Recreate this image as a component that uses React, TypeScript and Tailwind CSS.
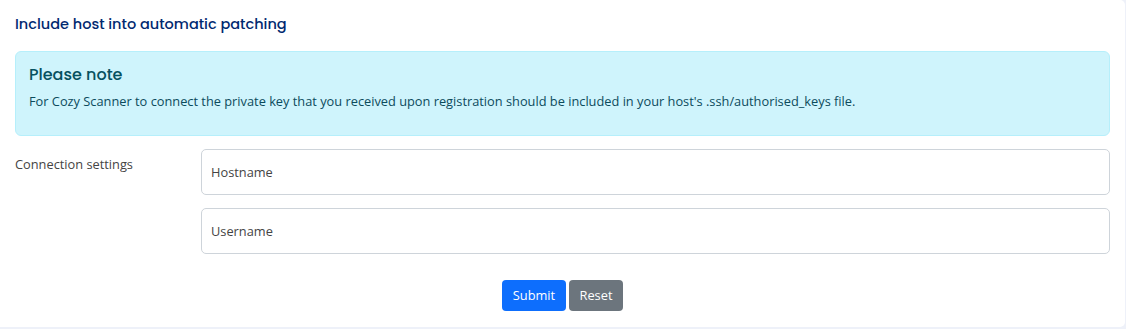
import React from 'react';

const heading = { fontFamily: 'Poppins, Inter, "Noto Sans", sans-serif' };

export default function App() {
  return (
    <div className="h-[329px] w-[1126px] bg-[#eef1f9] font-['Open_Sans',sans-serif]">
      <div className="h-[327px] w-[1125px] rounded-br-[5px] rounded-tr-[5px] bg-white px-[15px] pt-[14px]">
        <h2 style={heading} className="text-[14.5px] font-medium leading-[20px] text-[#012970]">
          Include host into automatic patching
        </h2>

        <div className="mt-[17px] h-[85px] w-[1095px] rounded-[6px] border border-[#b6effb] bg-[#cff4fc] px-[13px] pt-[12px] text-[#055160]">
          <h4 style={heading} className="text-[16px] font-medium leading-[22px]">Please note</h4>
          <p className="mt-[5px] text-[12.8px] leading-[20px] text-[#0c4b5c]">
            For Cozy Scanner to connect the private key that you received upon registration should be included in your host's .ssh/authorised_keys file.
          </p>
        </div>

        <div className="mt-[13px] flex w-[1095px]">
          <label className="w-[186px] pt-[5px] text-[12.8px] leading-[20px] text-[#444444]">Connection settings</label>
          <div className="flex flex-1 flex-col gap-[13px]">
            <input
              placeholder="Hostname"
              className="h-[46px] w-full rounded-[5px] border border-[#ced4da] bg-white px-[9px] text-[12.8px] text-[#212529] outline-none placeholder:text-[#444444]"
            />
            <input
              placeholder="Username"
              className="h-[46px] w-full rounded-[5px] border border-[#ced4da] bg-white px-[9px] text-[12.8px] text-[#212529] outline-none placeholder:text-[#444444]"
            />
          </div>
        </div>

        <div className="mt-[26px] flex justify-center gap-[3px]">
          <button className="h-[31px] w-[64px] rounded-[4px] bg-[#0d6efd] text-[12.8px] text-white">Submit</button>
          <button className="h-[31px] w-[54px] rounded-[4px] bg-[#6c757d] text-[12.8px] text-white">Reset</button>
        </div>
      </div>
    </div>
  );
}
